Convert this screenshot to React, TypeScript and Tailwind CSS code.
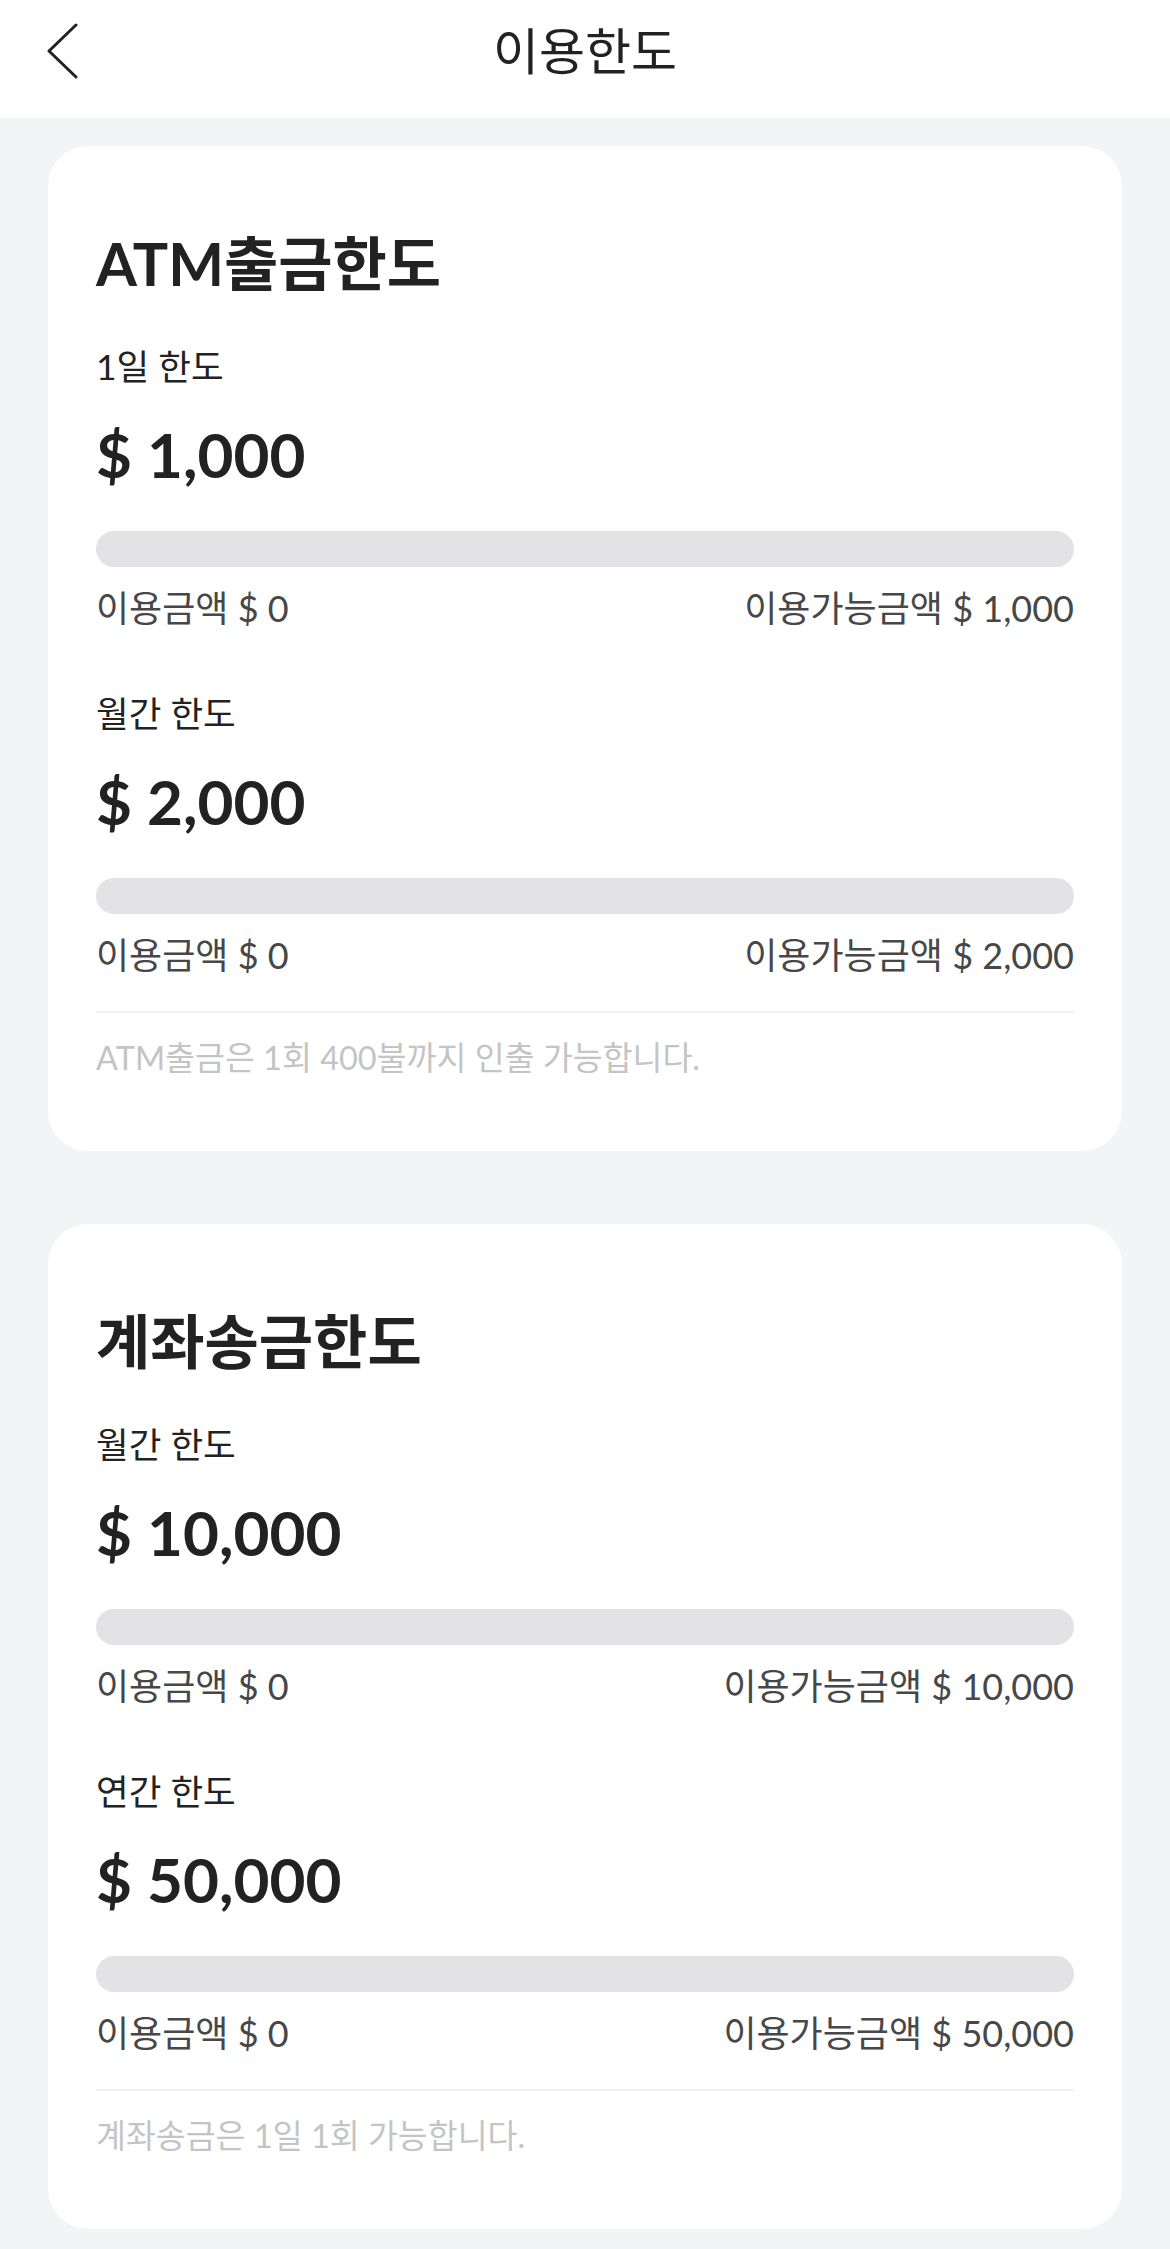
import React from 'react';

interface LimitRow {
  label: string;
  amount: string;
}

interface LimitCard {
  title: string;
  rows: LimitRow[];
  note: string;
}

const cards: LimitCard[] = [
  {
    title: 'ATM출금한도',
    rows: [
      { label: '1일 한도', amount: '1,000' },
      { label: '월간 한도', amount: '2,000' },
    ],
    note: 'ATM출금은 1회 400불까지 인출 가능합니다.',
  },
  {
    title: '계좌송금한도',
    rows: [
      { label: '월간 한도', amount: '10,000' },
      { label: '연간 한도', amount: '50,000' },
    ],
    note: '계좌송금은 1일 1회 가능합니다.',
  },
];

const BackIcon = () => (
  <svg width="32" height="58" viewBox="0 0 32 58" fill="none">
    <polyline
      points="30,3 3,29 30,55"
      stroke="#222222"
      strokeWidth="3"
      strokeLinecap="round"
      strokeLinejoin="round"
    />
  </svg>
);

const Card: React.FC<{ card: LimitCard }> = ({ card }) => (
  <section className="rounded-[40px] bg-white px-[48px] pt-[84px] pb-[73px]">
    <h2 className="text-[59px] font-bold leading-[68px] text-[#222222]">{card.title}</h2>

    {card.rows.map((row, i) => (
      <div key={row.label} className={i === 0 ? 'mt-[47px]' : 'mt-[62px]'}>
        <p className="text-[35.5px] leading-[44px] text-[#222222]">{row.label}</p>
        <p className="mt-[29px] text-[62px] font-bold leading-[72px] text-[#222222]">$ {row.amount}</p>
        {/* usage bar, nothing used yet */}
        <div className="mt-[41px] h-[36px] w-full rounded-full bg-[#e3e3e5]" />
        <div className="mt-[19px] flex items-center justify-between text-[36px] leading-[44px] text-[#474747]">
          <span>이용금액 $ 0</span>
          <span>이용가능금액 $ {row.amount}</span>
        </div>
      </div>
    ))}

    <div className="mt-[34px] h-[2px] w-full bg-[#f1f1f3]" />
    <p className="mt-[25px] text-[32.5px] leading-[40px] text-[#c4c4c4]">{card.note}</p>
  </section>
);

export default function App() {
  return (
    <div className="min-h-screen bg-[#f3f4f6] font-[Lato,'Noto_Sans_CJK_KR',sans-serif]">
      <header className="h-[118px] bg-white">
        <div className="grid h-[102px] grid-cols-[1fr_auto_1fr] items-center">
          <button className="ml-[46px] flex w-fit items-center">
            <BackIcon />
          </button>
          <h1 className="text-[50px] leading-none text-[#222222]">이용한도</h1>
          <div />
        </div>
      </header>

      <main className="flex flex-col gap-[73px] px-[48px] pt-[28px] pb-[22px]">
        {cards.map((card) => (
          <Card key={card.title} card={card} />
        ))}
      </main>
    </div>
  );
}
